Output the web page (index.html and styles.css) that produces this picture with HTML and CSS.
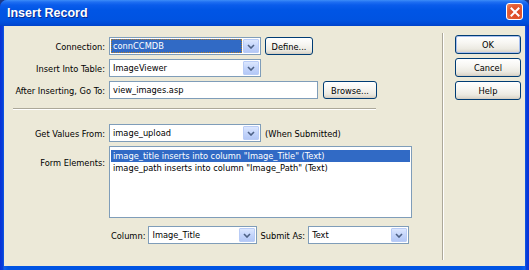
FILE: index.html
```html
<!DOCTYPE html>
<html>
<head>
<meta charset="utf-8">
<link rel="stylesheet" href="styles.css">
</head>
<body>
<div class="window">
  <div class="titlebar">
    <span class="title">Insert Record</span>
    <span class="close"><svg width="10" height="10" viewBox="0 0 10 10"><path d="M1.5 1.5 L8.5 8.5 M8.5 1.5 L1.5 8.5" stroke="#fff" stroke-width="2" stroke-linecap="square"/></svg></span>
  </div>
  <div class="client">
    <div class="main">
      <div class="row">
        <span class="lbl">Connection:</span>
        <div class="select w152"><span class="val sel">connCCMDB</span><span class="drop"><svg width="8" height="5" viewBox="0 0 8 5"><path d="M1 1 L4 4 L7 1" fill="none" stroke="#4D6185" stroke-width="1.6"/></svg></span></div>
        <button class="btn define">Define...</button>
      </div>
      <div class="row">
        <span class="lbl">Insert Into Table:</span>
        <div class="select w152"><span class="val">ImageViewer</span><span class="drop"><svg width="8" height="5" viewBox="0 0 8 5"><path d="M1 1 L4 4 L7 1" fill="none" stroke="#4D6185" stroke-width="1.6"/></svg></span></div>
      </div>
      <div class="row">
        <span class="lbl">After Inserting, Go To:</span>
        <div class="input"><span class="val">view_images.asp</span></div>
        <button class="btn browse">Browse...</button>
      </div>
      <div class="hr"></div>
      <div class="row r4">
        <span class="lbl">Get Values From:</span>
        <div class="select w152"><span class="val">image_upload</span><span class="drop"><svg width="8" height="5" viewBox="0 0 8 5"><path d="M1 1 L4 4 L7 1" fill="none" stroke="#4D6185" stroke-width="1.6"/></svg></span></div>
        <span class="note">(When Submitted)</span>
      </div>
      <div class="row r5">
        <span class="lbl lbl-top">Form Elements:</span>
        <div class="list">
          <div class="item on">image_title inserts into column "Image_Title" (Text)</div>
          <div class="item">image_path inserts into column "Image_Path" (Text)</div>
        </div>
      </div>
      <div class="row r6">
        <span class="small-lbl">Column:</span>
        <div class="select w109"><span class="val">Image_Title</span><span class="drop"><svg width="8" height="5" viewBox="0 0 8 5"><path d="M1 1 L4 4 L7 1" fill="none" stroke="#4D6185" stroke-width="1.6"/></svg></span></div>
        <span class="small-lbl">Submit As:</span>
        <div class="select w101"><span class="val">Text</span><span class="drop"><svg width="8" height="5" viewBox="0 0 8 5"><path d="M1 1 L4 4 L7 1" fill="none" stroke="#4D6185" stroke-width="1.6"/></svg></span></div>
      </div>
    </div>
    <div class="vsep"></div>
    <div class="side">
      <button class="btn sbtn default">OK</button>
      <button class="btn sbtn">Cancel</button>
      <button class="btn sbtn">Help</button>
    </div>
  </div>
</div>
</body>
</html>
```
FILE: styles.css
```css
html, body {
  margin: 0;
  padding: 0;
  background: #1a3a8a;
}
body {
  font-family: "DejaVu Sans Condensed", "Liberation Sans", sans-serif;
  font-size: 9.2px;
  color: #000;
}
.window {
  width: 529px;
  height: 270px;
  display: flex;
  flex-direction: column;
  background: linear-gradient(to right, #0831D9 0, #0841D8 3px, #1262EC 4px, #0054E3 8px, #0054E3 521px, #1262EC 525px, #0841D8 526px, #0831D9 529px);
  border-radius: 7px 7px 0 0;
  overflow: hidden;
}
.titlebar {
  height: 26px;
  flex: none;
  display: flex;
  align-items: center;
  padding: 0 6px 0 7px;
  background: linear-gradient(#3D8DF8 0, #1F6FF2 2px, #0A5CEB 5px, #0055E5 10px, #0053E1 20px, #004AD6 24px, #0042C8 26px);
}
.title {
  flex: 1;
  color: #fff;
  font-family: "Liberation Sans", sans-serif;
  font-weight: bold;
  font-size: 12.5px;
  text-shadow: 1px 1px #0A2A8F;
  margin-top: -1px;
}
.close {
  width: 15px;
  height: 15px;
  border: 1px solid #fff;
  border-radius: 3px;
  background: radial-gradient(circle at 60% 60%, #D84020 0, #E35C33 60%, #EE8B6B 100%);
  display: flex;
  align-items: center;
  justify-content: center;
  margin-top: -3px;
}
.client {
  flex: 1;
  margin: 0 4px 4px 4px;
  background: #ECE9D8;
  display: flex;
}
.main {
  width: 434px;
  flex: none;
  padding-top: 11px;
  display: flex;
  flex-direction: column;
}
.row {
  display: flex;
  align-items: center;
  height: 18px;
  gap: 4px;
}
.row + .row {
  margin-top: 4px;
}
.lbl {
  width: 101px;
  flex: none;
  text-align: right;
  white-space: nowrap;
}
.select, .input {
  box-sizing: border-box;
  height: 18px;
  border: 1px solid #7F9DB9;
  background: #fff;
  display: flex;
  align-items: center;
  padding: 1px;
  flex: none;
}
.w152 { width: 152px; }
.w109 { width: 109px; }
.w101 { width: 101px; }
.input { width: 209px; }
.val {
  flex: 1;
  height: 14px;
  line-height: 14px;
  padding-left: 2px;
  white-space: nowrap;
  overflow: hidden;
}
.val.sel {
  background: #316AC5;
  color: #fff;
  margin-right: 1px;
  outline: 1px dotted #B4802A;
  outline-offset: -1px;
}
.drop {
  box-sizing: border-box;
  width: 16px;
  height: 14px;
  flex: none;
  border: 1px solid #B9CCF6;
  border-radius: 1px;
  background: linear-gradient(#DCE7FE, #C4D5FB 50%, #B4C8F6);
  display: flex;
  align-items: center;
  justify-content: center;
}
.btn {
  box-sizing: border-box;
  height: 18px;
  padding: 0;
  border: 1px solid #003C74;
  border-radius: 3px;
  background: linear-gradient(#FFFFFF 0, #F7F6F2 40%, #ECEAE2 75%, #D8D2C6 100%);
  box-shadow: inset 0 -1px #D6D0C5;
  font-family: inherit;
  font-size: 9.2px;
  color: #000;
  flex: none;
}
.define { width: 48px; }
.browse { width: 54px; margin-left: 1px; }
.hr {
  margin: 9px 0 0 9px;
  width: 363px;
  height: 0;
  border-top: 1px solid #ACA899;
  border-bottom: 1px solid #fff;
}
.row.r4 { margin-top: 14px; }
.note { white-space: nowrap; }
.row.r5 {
  height: 72px;
  align-items: flex-start;
}
.lbl-top { padding-top: 11px; }
.list {
  box-sizing: border-box;
  width: 303px;
  height: 72px;
  border: 1px solid #7F9DB9;
  background: #fff;
  padding: 3px 1px;
}
.item {
  height: 12px;
  line-height: 12px;
  padding-left: 2px;
  white-space: nowrap;
}
.item.on {
  background: #316AC5;
  color: #fff;
}
.row.r6 {
  margin-top: 8px;
  padding-left: 107px;
  gap: 3px;
}
.small-lbl { white-space: nowrap; }
.vsep {
  flex: none;
  width: 0;
  margin: 7px 0 0 4px;
  height: 227px;
  border-left: 1px solid #ACA899;
  border-right: 1px solid #fff;
}
.side {
  flex: none;
  margin-left: 11px;
  padding-top: 9px;
  display: flex;
  flex-direction: column;
  gap: 4px;
}
.sbtn {
  width: 66px;
  height: 19px;
}
.sbtn.default {
  box-shadow: inset 0 0 0 1px #A9C0EE, inset 0 -1px #D6D0C5;
}
```
